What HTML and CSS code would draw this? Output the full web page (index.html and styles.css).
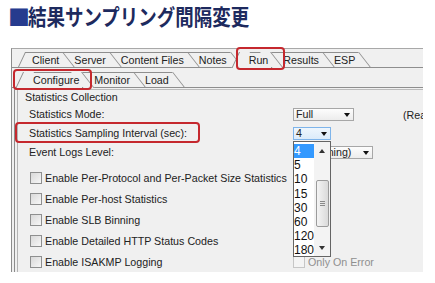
FILE: index.html
```html
<!DOCTYPE html>
<html lang="ja">

<head>
    <meta charset="UTF-8">
    <meta name="viewport" content="width=device-width, initial-scale=1.0">
    <title>結果サンプリング間隔変更</title>
    <link rel="stylesheet" href="styles.css">
</head>

<body>

    <h1 class="title"><span class="bullet">■</span><span class="title-text">結果サンプリング間隔変更</span></h1>

    <div class="window">
        <!-- main tabs -->
        <div class="tabs">
            <span class="tab first">Client</span>
            <span class="tab">Server</span>
            <span class="tab">Content Files</span>
            <span class="tab">Notes</span>
            <span class="tab active">Run</span>
            <span class="tab">Results</span>
            <span class="tab">ESP</span>
        </div>

        <!-- run sub tabs -->
        <div class="tabs sub">
            <span class="tab first active">Configure</span>
            <span class="tab">Monitor</span>
            <span class="tab">Load</span>
        </div>

        <div class="panel">
            <div class="panel-inner">
                <div class="group-title">Statistics Collection</div>

                <div class="fields">
                    <label>Statistics Mode:</label>
                    <div class="select wide"><span>Full</span><i class="arrow"></i></div>
                    <span class="note">(Real-time)</span>

                    <label>Statistics Sampling Interval (sec):</label>
                    <div class="dropdown">
                        <div class="select focus"><span>4</span><i class="arrow"></i></div>
                        <div class="list">
                            <ul>
                                <li class="selected">4</li>
                                <li>5</li>
                                <li>10</li>
                                <li>15</li>
                                <li>30</li>
                                <li>60</li>
                                <li>120</li>
                                <li>180</li>
                            </ul>
                            <div class="scrollbar">
                                <span class="sb-btn up"></span>
                                <span class="thumb"><i class="grip"></i></span>
                                <span class="sb-btn down"></span>
                            </div>
                        </div>
                    </div>
                    <span></span>

                    <label>Event Logs Level:</label>
                    <div class="select event"><span>1 (Warning)</span><i class="arrow"></i></div>
                </div>

                <div class="checks">
                    <label class="check"><span class="box"></span>Enable Per-Protocol and Per-Packet Size Statistics</label>
                    <label class="check"><span class="box"></span>Enable Per-host Statistics</label>
                    <label class="check"><span class="box"></span>Enable SLB Binning</label>
                    <label class="check"><span class="box"></span>Enable Detailed HTTP Status Codes</label>
                    <label class="check"><span class="box"></span>Enable ISAKMP Logging</label>
                    <label class="check disabled"><span class="box"></span>Only On Error</label>
                </div>
            </div>
        </div>

        <!-- red annotation boxes -->
        <div class="callout callout-run"></div>
        <div class="callout callout-configure"></div>
        <div class="callout callout-sampling"></div>
    </div>

</body>

</html>
```

FILE: styles.css
```css
* {
    box-sizing: border-box;
}

body {
    margin: 0;
    background: #fff;
    font-family: "Liberation Sans", Arial, sans-serif;
    font-size: 10.7px;
    color: #222;
}

.title {
    margin: 0;
    height: 48px;
    padding: 2px 0 0 8px;
    font-family: "Noto Sans CJK JP", sans-serif;
    font-size: 22px;
    line-height: 26px;
    font-weight: bold;
    color: #1d2a5e;
    white-space: nowrap;
}

.title .bullet {
    color: #263b8e;
    margin-right: -2px;
}

.title .title-text {
    display: inline-block;
    transform: scaleX(0.84);
    transform-origin: left center;
}

.window {
    position: relative;
    margin-left: 11px;
    width: 412px;
    height: 224px;
    background: #f0f0f0;
    border-top: 1px solid #a8a8a8;
    border-left: 1px solid #8c8c8c;
}

/* tabs */
.tabs {
    display: flex;
    height: 19px;
    padding-top: 3px;
    border-bottom: 1px solid #8e8e8e;
}

.tabs.sub {
    height: 20px;
    padding-top: 4px;
}

.tab {
    position: relative;
    padding: 0 3px 0 12px;
    border-top: 1px solid #8e8e8e;
    line-height: 14px;
    white-space: nowrap;
}

.tab::after {
    content: "";
    position: absolute;
    top: -1px;
    left: 100%;
    height: 15px;
    border-left: 1px solid #8e8e8e;
    transform: skewX(38deg);
    transform-origin: top left;
}

.tab.first {
    margin-left: 13px;
    padding-left: 7px;
}

.tabs.sub .tab.first {
    margin-left: 11px;
}

.tab.first::before,
.tab.active::before {
    content: "";
    position: absolute;
    top: -1px;
    left: 0;
    width: 10px;
    height: 15px;
    border-left: 1px solid #8e8e8e;
    transform: skewX(-25deg);
    transform-origin: top left;
}

.tab.active {
    z-index: 1;
    margin-left: 9px;
    margin-bottom: -1px;
    padding-left: 10px;
    background: #f0f0f0;
}

.tab.active::before {
    height: 16px;
    z-index: -1;
    background: #f0f0f0;
}

.tab.active::after {
    left: auto;
    right: 0;
    width: 10px;
    height: 16px;
    z-index: -1;
    border-left: none;
    border-right: 1px solid #8e8e8e;
    background: #f0f0f0;
    transform-origin: top right;
}

/* content panel */
.panel {
    height: 183px;
    margin: 1px 0 0 2px;
    border-top: 1px solid #bcbcbc;
    border-left: 1px solid #8c8c8c;
    overflow: hidden;
}

.panel-inner {
    height: 100%;
    margin-left: 2px;
    padding-left: 7px;
    border-left: 1px solid #b4b4b4;
}

.group-title {
    line-height: 15px;
}

.fields {
    display: grid;
    grid-template-columns: 264px 110px auto;
    grid-auto-rows: 13px;
    row-gap: 6px;
    align-items: center;
    margin: 3px 0 0 4px;
    white-space: nowrap;
}

.fields label {
    line-height: 13px;
}

.select {
    display: flex;
    align-items: center;
    justify-content: space-between;
    height: 13px;
    padding: 0 3px 0 2px;
    border: 1px solid #a7a7a7;
    background: linear-gradient(#fdfdfd, #ececec);
    line-height: 11px;
}

.select.wide {
    width: 61px;
}

.select.event {
    width: 80px;
}

.select.focus {
    border-color: #7eb4ea;
    background: linear-gradient(#eef6fd, #dbebfa);
}

.arrow {
    width: 0;
    height: 0;
    border-left: 3.5px solid transparent;
    border-right: 3.5px solid transparent;
    border-top: 4px solid #111;
}

.dropdown {
    position: relative;
    width: 38px;
}

.list {
    position: absolute;
    top: 100%;
    left: 0;
    z-index: 2;
    display: flex;
    width: 38px;
    height: 116px;
    margin-top: 1px;
    border: 1px solid #646464;
    background: #fff;
}

.list ul {
    flex: 1;
    margin: 0;
    padding: 2px 0 0;
    list-style: none;
    font-size: 12px;
    line-height: 14.2px;
    color: #111;
}

.list li.selected {
    background: #3399ff;
    color: #fff;
}

.scrollbar {
    display: flex;
    flex-direction: column;
    align-items: center;
    width: 16px;
    background: #f3f3f3;
}

.sb-btn {
    display: flex;
    align-items: center;
    justify-content: center;
    width: 100%;
    height: 17px;
}

.sb-btn::before {
    content: "";
    border-left: 3.5px solid transparent;
    border-right: 3.5px solid transparent;
}

.sb-btn.up::before {
    border-bottom: 4px solid #333;
}

.sb-btn.down {
    margin-top: auto;
}

.sb-btn.down::before {
    border-top: 4px solid #333;
}

.thumb {
    display: flex;
    align-items: center;
    justify-content: center;
    width: 13px;
    height: 47px;
    margin-top: 21px;
    border: 1px solid #9b9b9b;
    border-radius: 2px;
    background: linear-gradient(90deg, #f4f4f4, #dadada);
}

.grip {
    width: 5px;
    height: 5px;
    background: repeating-linear-gradient(#8a8a8a 0 1px, transparent 1px 2px);
}

/* checkboxes */
.checks {
    display: grid;
    grid-template-columns: 263px auto;
    grid-auto-rows: 13px;
    row-gap: 8px;
    margin: 12px 0 0 5px;
}

.check {
    grid-column: 1;
    display: flex;
    align-items: center;
    gap: 3px;
    white-space: nowrap;
}

.box {
    width: 12px;
    height: 12px;
    border: 1px solid #8e8f8f;
    background: linear-gradient(135deg, #d9d9d9, #f7f7f7);
}

.check.disabled {
    grid-column: 2;
    color: #8f8f8f;
}

.check.disabled .box {
    border-color: #c6c6c6;
    background: #f4f4f4;
}

/* annotations */
.callout {
    position: absolute;
    z-index: 3;
    border: 2px solid #c5282e;
    border-radius: 4px;
}

.callout-run {
    left: 224px;
    top: -2px;
    width: 49px;
    height: 23px;
}

.callout-configure {
    left: 1px;
    top: 20px;
    width: 79px;
    height: 21px;
}

.callout-sampling {
    left: 3px;
    top: 73px;
    width: 185px;
    height: 21px;
}
```
